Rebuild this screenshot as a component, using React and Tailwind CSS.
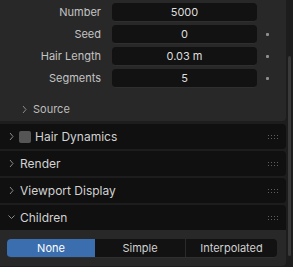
import React from "react";

const font = { fontFamily: "Inter, 'Noto Sans', sans-serif" };

function Chevron({ down = false, className = "" }) {
  return (
    <svg width="7" height="9" viewBox="0 0 7 9" className={className}>
      {down ? (
        <path d="M0.5 2.5 L3.5 5.5 L6.5 2.5" fill="none" stroke="#8c8c8c" strokeWidth="1" />
      ) : (
        <path d="M2 1 L5 4.5 L2 8" fill="none" stroke="#8c8c8c" strokeWidth="1" />
      )}
    </svg>
  );
}

function Grip() {
  const dots = [];
  for (let r = 0; r < 2; r++)
    for (let c = 0; c < 4; c++)
      dots.push(<rect key={`${r}-${c}`} x={c * 3} y={r * 3} width="1" height="1" fill="#5e5e5e" />);
  return (
    <svg width="10" height="4" viewBox="0 0 10 4" className="shrink-0">
      {dots}
    </svg>
  );
}

function Field({ label, value, dot = true }) {
  return (
    <div className="flex items-center h-[19px] mb-[3px]">
      <div className="w-[101px] text-right text-[11px] text-[#c4c4c4] leading-none">{label}</div>
      <div className="ml-[11px] w-[145px] h-[19px] rounded-[4px] bg-[#121212] border-b border-[#2f2f2f] flex items-center justify-center text-[11px] text-[#dedede] leading-none">
        {value}
      </div>
      {dot && <div className="ml-[9px] w-[3px] h-[3px] rounded-[1px] bg-[#8e8e8e]" />}
    </div>
  );
}

function Header({ children, open = false, checkbox = false }) {
  return (
    <div className={`h-[25px] bg-[#101010] flex items-center pr-[8px] ${open ? "rounded-tr-[4px]" : "rounded-r-[4px]"}`}>
      <Chevron down={open} className="ml-[8px] shrink-0" />
      {checkbox && <div className="ml-[4px] w-[12px] h-[12px] rounded-[2px] bg-[#555555]" />}
      <div className={`${checkbox ? "ml-[4px]" : "ml-[5px]"} text-[12px] text-[#d2d2d2] leading-none flex-1`}>{children}</div>
      <Grip />
    </div>
  );
}

export default function App() {
  return (
    <div style={font} className="w-[293px] h-[267px] bg-[#1d1d1d] flex overflow-hidden select-none">
      <div className="w-[286px] flex flex-col">
        <div className="bg-[#282828] rounded-br-[4px] pt-[3px] pb-[3px]">
          <Field label="Number" value="5000" dot={false} />
          <Field label="Seed" value="0" />
          <Field label="Hair Length" value="0.03 m" />
          <Field label="Segments" value="5" />
          <div className="mt-[12px] h-[18px] flex items-center">
            <Chevron className="ml-[21px]" />
            <span className="ml-[5px] text-[11px] text-[#bdbdbd] leading-none">Source</span>
          </div>
        </div>
        <div className="mt-[3px] flex flex-col gap-[2px]">
          <Header checkbox>Hair Dynamics</Header>
          <Header>Render</Header>
          <Header>Viewport Display</Header>
          <div>
            <Header open>Children</Header>
            <div className="bg-[#282828] rounded-br-[4px] pt-[9px] pb-[8px] pl-[7px]">
              <div className="flex w-[270px] h-[19px] rounded-[4px] overflow-hidden bg-[#121212] border-b border-[#2f2f2f] text-[11px] leading-none">
                <div className="w-[88px] bg-[#3b6eae] text-white flex items-center justify-center">None</div>
                <div className="w-[91px] text-[#d0d0d0] flex items-center justify-center border-r border-[#2a2a2a]">Simple</div>
                <div className="flex-1 text-[#d0d0d0] flex items-center justify-center">Interpolated</div>
              </div>
            </div>
          </div>
        </div>
      </div>
      <div className="w-[7px] flex flex-col">
        <div className="h-[56px]" />
        <div className="ml-[2px] w-[3px] h-[200px] rounded-full bg-[#3a3a3a]" />
      </div>
    </div>
  );
}
